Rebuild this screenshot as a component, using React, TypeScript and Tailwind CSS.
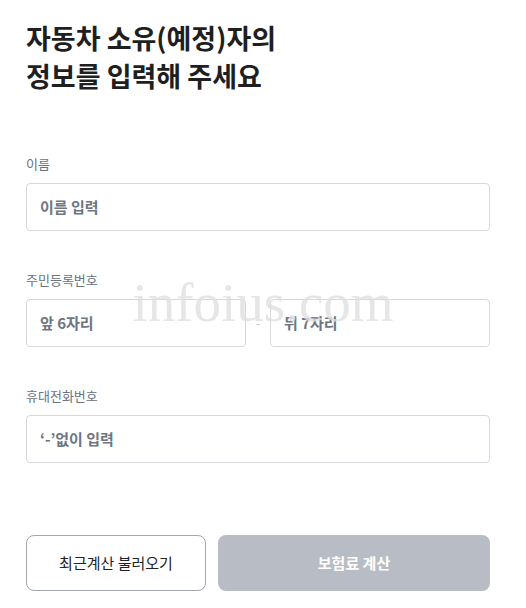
import React from "react";

const font = { fontFamily: '"Noto Sans CJK KR", "Noto Sans", sans-serif' };

function Field({ label, children }: { label: string; children: React.ReactNode }) {
  return (
    <div className="flex flex-col">
      <label className="text-[13px] leading-[18px] text-[#6b7280]">{label}</label>
      <div className="mt-[10px]">{children}</div>
    </div>
  );
}

function Input({ placeholder, className = "" }: { placeholder: string; className?: string }) {
  return (
    <div
      className={`h-[48px] flex items-center px-[13px] border border-[#d5d8dd] rounded-[4px] bg-white ${className}`}
    >
      <span className="text-[15px] font-bold text-[#6e7583]">{placeholder}</span>
    </div>
  );
}

export default function App() {
  return (
    <div className="relative min-h-screen bg-white text-[#222]" style={font}>
      <div className="w-[464px] ml-[26px] pt-[19px]">
        <h1 className="text-[27px] leading-[38px] font-bold text-[#1f1f1f]">
          자동차 소유(예정)자의
          <br />
          정보를 입력해 주세요
        </h1>

        <div className="mt-[60px] flex flex-col gap-[40px]">
          <Field label="이름">
            <Input placeholder="이름 입력" />
          </Field>

          <Field label="주민등록번호">
            <div className="flex items-center">
              <Input placeholder="앞 6자리" className="w-[220px]" />
              <span className="w-[24px] text-center text-[13px] text-[#c4c8ce]">-</span>
              <Input placeholder="뒤 7자리" className="flex-1" />
            </div>
          </Field>

          <Field label="휴대전화번호">
            <Input placeholder="‘-’없이 입력" />
          </Field>
        </div>

        <div className="mt-[72px] flex gap-[12px]">
          <button className="w-[180px] h-[56px] rounded-[8px] border border-[#a3a8b0] bg-white text-[15px] text-[#222]">
            최근계산 불러오기
          </button>
          <button className="flex-1 h-[56px] rounded-[8px] bg-[#b8bdc5] text-[15px] font-bold text-white">
            보험료 계산
          </button>
        </div>
      </div>

      <div
        className="absolute left-0 right-0 top-[270px] text-center text-[55px] leading-[66px] text-[#e0e0e0]/80 pointer-events-none"
        style={{ fontFamily: '"Liberation Serif", serif' }}
      >
        infoius.com
      </div>
    </div>
  );
}
